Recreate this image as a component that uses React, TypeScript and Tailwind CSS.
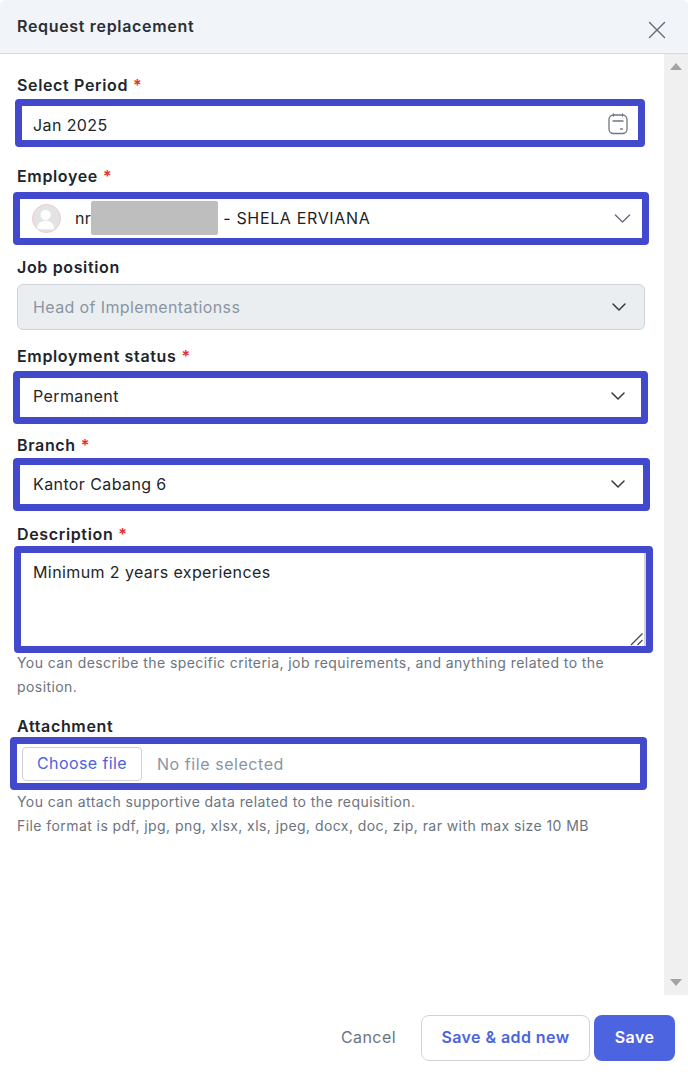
import React from "react";

const FONT = "[font-family:Inter,'Liberation_Sans',sans-serif]";

function Chevron({ className = "", stroke = "#343a40", width = 1.5 }: { className?: string; stroke?: string; width?: number }) {
  return (
    <svg width="16" height="16" viewBox="0 0 16 16" fill="none" className={className}>
      <path d="M2 5l6 6 6-6" stroke={stroke} strokeWidth={width} strokeLinecap="round" strokeLinejoin="round" />
    </svg>
  );
}

function Label({ text, required, className = "" }: { text: string; required?: boolean; className?: string }) {
  return (
    <div className={`text-[16px] leading-[24px] font-semibold tracking-[0.65px] text-[#212529] ${className}`}>
      {text}
      {required && <span className="text-[#ee2a2e] ml-[5px]">*</span>}
    </div>
  );
}

function Frame({ className, children }: { className: string; children: React.ReactNode }) {
  return (
    <div className={`border-[7px] border-[#4249cc] rounded-[4px] bg-white flex items-center text-[16px] tracking-[0.4px] text-[#212529] ${className}`}>
      {children}
    </div>
  );
}

export default function App() {
  return (
    <div className={`w-[688px] h-[1079px] bg-white flex flex-col overflow-hidden rounded-t-[6px] ${FONT}`}>
      <header className="h-[54px] shrink-0 bg-[#f1f4f9] border-b border-[#d3d8e2] flex items-start justify-between pl-[17px] pr-[22px]">
        <h1 className="text-[16px] leading-[22px] font-semibold tracking-[0.68px] text-[#2b2f33] mt-[15px]">Request replacement</h1>
        <svg width="18" height="18" viewBox="0 0 18 18" fill="none" className="mt-[21px]">
          <path d="M1.500 1.500l15 15M16.500 1.500l-15 15" stroke="#5f6b7a" strokeWidth="1.4" strokeLinecap="round" />
        </svg>
      </header>

      <div className="flex flex-1 min-h-0">
        <main className="flex-1 pl-[17px] pt-[19px] flex flex-col">
          <Label text="Select Period" required />
          <Frame className="ml-[-2px] w-[630px] h-[48px] mt-[2px] justify-between pl-[11px] pr-[10px] pt-[4px]">
            <span>Jan 2025</span>
            <svg width="20" height="22" viewBox="0 0 20 22" fill="none" className="mt-[-3px]">
              <rect x="1" y="2" width="18" height="18.5" rx="4.5" stroke="#6c7786" strokeWidth="1.3" />
              <path d="M5.500 1v2M14.500 1v2" stroke="#6c7786" strokeWidth="1.3" strokeLinecap="round" />
              <path d="M5 8h10" stroke="#6c7786" strokeWidth="1.3" strokeLinecap="round" />
              <path d="M12.500 16h2" stroke="#6c7786" strokeWidth="1.3" strokeLinecap="round" />
            </svg>
          </Frame>

          <Label text="Employee" required className="mt-[17px]" />
          <Frame className="ml-[-4px] w-[636px] h-[53px] mt-[4px] pl-[12px] pr-[10px] pb-[1px]">
            <span className="w-[29px] h-[29px] rounded-full bg-[#e3e3e3] border border-[#f3c9c9] overflow-hidden shrink-0">
              <svg viewBox="0 0 29 29" width="27" height="27">
                <circle cx="13.5" cy="10.5" r="5.5" fill="#fff" />
                <path d="M4 26c1-7 5-9 9.500-9s8.500 2 9.500 9z" fill="#fff" />
              </svg>
            </span>
            <span className="ml-[14px] flex-1 flex items-center text-[#1c1f22]">
              nr
              <span className="w-[127px] h-[34px] bg-[#bebebe] rounded-[2px]" />
              <span className="ml-[5px] tracking-[0.65px]">- SHELA ERVIANA</span>
            </span>
            <Chevron className="w-[19px] h-[19px]" stroke="#5f6b7a" width={1.1} />
          </Frame>

          <Label text="Job position" className="mt-[10px]" />
          <div className="w-[628px] h-[46px] mt-[5px] bg-[#ebeef1] border border-[#ced4da] rounded-[6px] flex items-center justify-between pl-[15px] pr-[17px] text-[16px] tracking-[0.38px] text-[#8a95a2]">
            <span>Head of Implementationss</span>
            <Chevron />
          </div>

          <Label text="Employment status" required className="mt-[14px]" />
          <Frame className="ml-[-4px] w-[635px] h-[53px] mt-[3px] justify-between pl-[13px] pr-[15px] pb-[4px]">
            <span>Permanent</span>
            <Chevron />
          </Frame>

          <Label text="Branch" required className="mt-[9px]" />
          <Frame className="ml-[-4px] w-[637px] h-[53px] mt-[1px] justify-between pl-[13px] pr-[17px] pb-[2px]">
            <span>Kantor Cabang 6</span>
            <Chevron />
          </Frame>

          <Label text="Description" required className="mt-[11px]" />
          <Frame className="relative ml-[-3px] w-[639px] h-[107px] !items-stretch">
            <textarea
              readOnly
              defaultValue="Minimum 2 years experiences"
              className="w-full h-full bg-white pl-[12px] pt-[7px] leading-[24px] text-[#212529] border-r-2 border-[#cfd3dc] outline-none resize-none"
            />
            <svg width="14" height="14" viewBox="0 0 14 14" fill="none" className="absolute right-[2px] bottom-0">
              <path d="M1 13L12.500 1.500M7.500 13l5-5" stroke="#444" strokeWidth="1.2" />
            </svg>
          </Frame>
          <p className="w-[628px] mt-[-2px] text-[14px] leading-[24px] tracking-[0.43px] text-[#6b7480]">
            You can describe the specific criteria, job requirements, and anything related to the position.
          </p>

          <Label text="Attachment" className="mt-[15px]" />
          <Frame className="ml-[-7px] w-[637px] h-[53px] mt-[-1px] pl-[5px]">
            <span className="w-[120px] h-[34px] pb-[2px] border border-[#ced4da] rounded-[4px] flex items-center justify-center text-[#4c63e0]">
              Choose file
            </span>
            <span className="ml-[15px] tracking-[0.56px] text-[#8a95a2]">No file selected</span>
          </Frame>
          <p className="text-[14px] leading-[24px] tracking-[0.43px] text-[#6b7480]">
            You can attach supportive data related to the requisition.
            <br />
            File format is pdf, jpg, png, xlsx, xls, jpeg, docx, doc, zip, rar with max size 10 MB
          </p>
        </main>

        <aside className="w-[24px] h-[941px] shrink-0 bg-[#f0f0f0] flex flex-col items-center justify-between py-[9px]">
          <svg width="12" height="7" viewBox="0 0 12 7"><path d="M6 0l6 7H0z" fill="#a3a3a3" /></svg>
          <svg width="12" height="7" viewBox="0 0 12 7"><path d="M0 0h12L6 7z" fill="#a3a3a3" /></svg>
        </aside>
      </div>

      <footer className="h-[84px] shrink-0 flex items-start justify-end pr-[13px] pt-[20px] tracking-[0.43px]">
        <button className="text-[16px] leading-[44px] text-[#6b7480] mr-[25px]">Cancel</button>
        <button className="w-[169px] h-[46px] pb-[2px] border border-[#ced4da] rounded-[8px] bg-white text-[16px] font-semibold text-[#4c63e0] mr-[4px]">
          Save &amp; add new
        </button>
        <button className="w-[81px] h-[46px] pb-[2px] rounded-[8px] bg-[#4d64e0] text-[16px] font-semibold text-white">Save</button>
      </footer>
    </div>
  );
}
